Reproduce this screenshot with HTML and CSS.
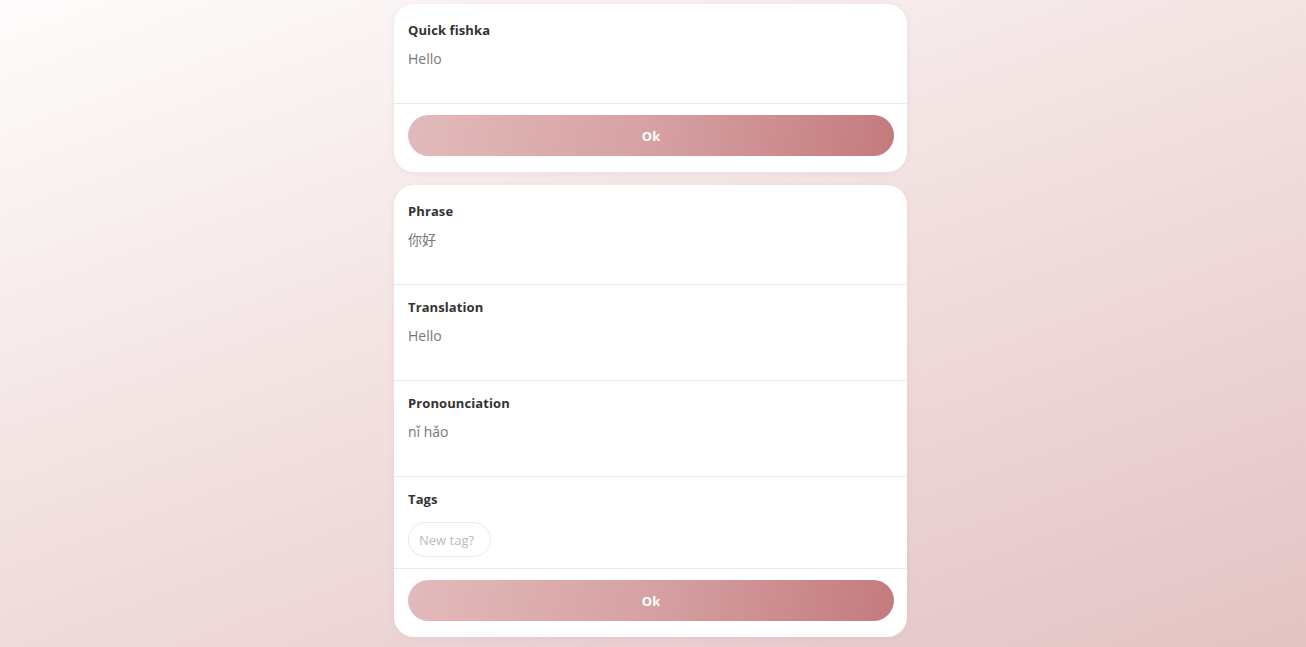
FILE: index.html
```html
<!DOCTYPE html>
<html>
<head>
<meta charset="utf-8">
<link rel="stylesheet" href="styles.css">
</head>
<body>
<main class="page">
  <section class="card">
    <div class="field">
      <div class="label">Quick fishka</div>
      <div class="value">Hello</div>
    </div>
    <div class="actions"><button class="btn">Ok</button></div>
  </section>
  <section class="card">
    <div class="field">
      <div class="label">Phrase</div>
      <div class="value">你好</div>
    </div>
    <div class="field">
      <div class="label">Translation</div>
      <div class="value">Hello</div>
    </div>
    <div class="field">
      <div class="label">Pronounciation</div>
      <div class="value">nǐ hǎo</div>
    </div>
    <div class="field field-tags">
      <div class="label">Tags</div>
      <input class="tag-input" type="text" placeholder="New tag?">
    </div>
    <div class="actions"><button class="btn">Ok</button></div>
  </section>
</main>
</body>
</html>
```
FILE: styles.css
```css
html, body {
  margin: 0;
  padding: 0;
  height: 100%;
}
body {
  background: linear-gradient(160deg, #fefcfc 0%, #f3e2e2 45%, #e3c3c4 100%);
  font-family: "Open Sans", "Noto Sans", "Noto Sans CJK SC", sans-serif;
  overflow: hidden;
}
.page {
  width: 513px;
  margin-left: calc(50% - 259px);
  padding-top: 4px;
  display: flex;
  flex-direction: column;
  gap: 13px;
}
.card {
  background: #fff;
  border-radius: 20px;
  padding-top: 4px;
  box-shadow: 0 1px 6px rgba(190, 140, 140, 0.12);
  display: flex;
  flex-direction: column;
}
.field {
  padding: 12px 14px 34px;
  border-bottom: 1px solid #efeaea;
}
.label {
  font-size: 13px;
  font-weight: 700;
  color: #333;
  line-height: 20px;
  margin-bottom: 9px;
  letter-spacing: 0.1px;
}
.value {
  font-size: 14px;
  color: #777;
  line-height: 20px;
}
.field-tags {
  padding-bottom: 11px;
}
.field-tags .label {
  margin-bottom: 13px;
}
.tag-input {
  display: block;
  box-sizing: border-box;
  width: 83px;
  height: 35px;
  border: 1px solid #eeeaea;
  border-radius: 18px;
  padding: 0 10px;
  font-family: inherit;
  font-size: 13px;
  color: #777;
  background: #fff;
  outline: none;
}
.tag-input::placeholder {
  color: #bbb;
}
.actions {
  padding: 11px 13px 16px 14px;
}
.btn {
  display: block;
  width: 100%;
  height: 41px;
  border: none;
  border-radius: 21px;
  background: linear-gradient(100deg, #e2babb 0%, #d6a1a3 50%, #c47a7d 100%);
  color: #fff;
  font-family: inherit;
  font-size: 13px;
  font-weight: 700;
  cursor: pointer;
}
```
